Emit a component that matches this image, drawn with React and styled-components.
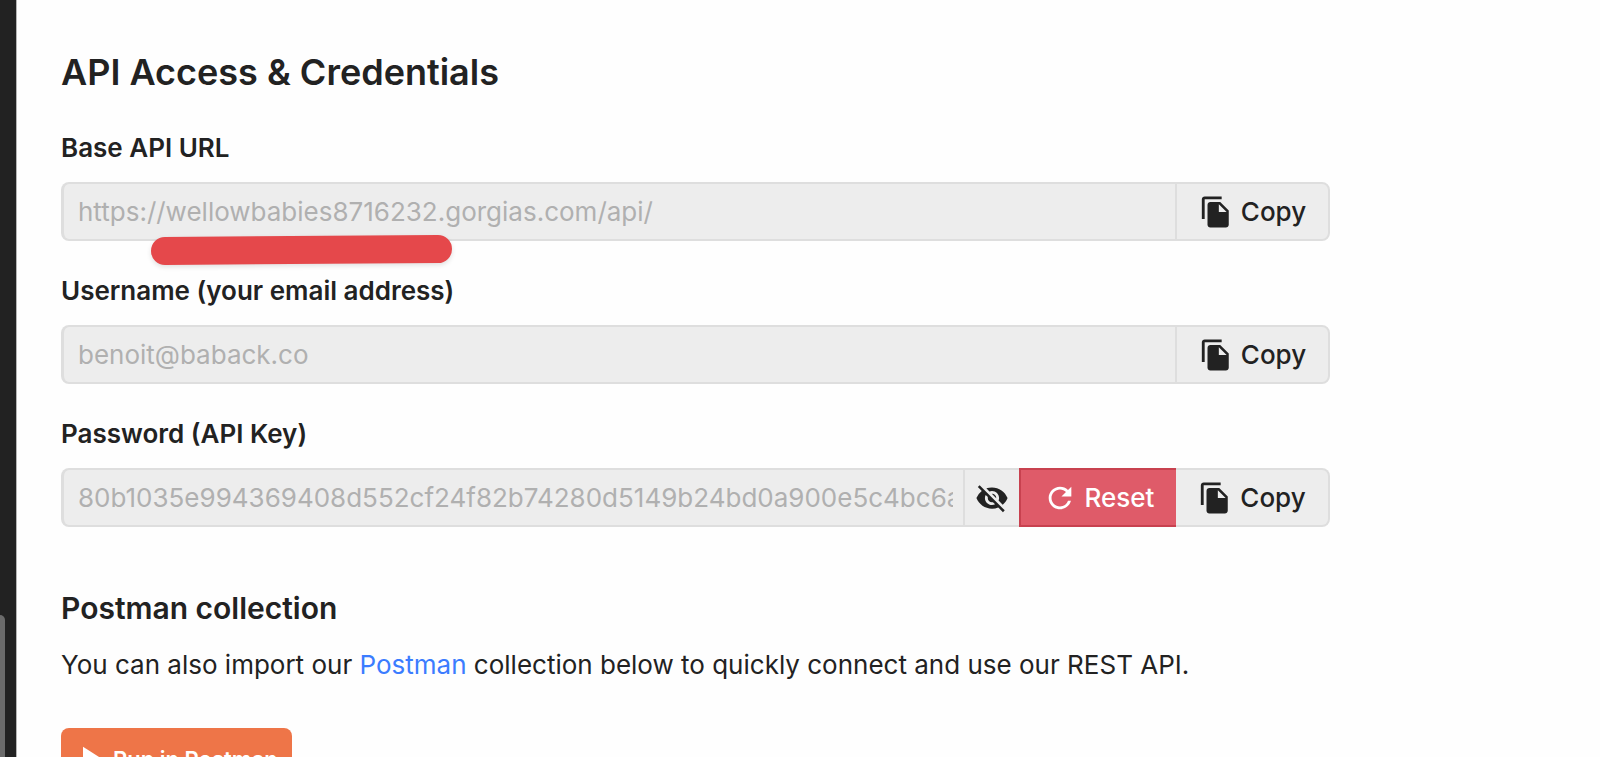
import React, { useState } from 'react'
import styled, { createGlobalStyle } from 'styled-components'
import { MdFileCopy, MdPlayArrow, MdRefresh, MdVisibilityOff } from 'react-icons/md'

const GlobalStyle = createGlobalStyle`
  * {
    box-sizing: border-box;
  }

  body {
    margin: 0;
    overflow: hidden;
    background: #fefefe;
    color: #222;
    font-family: Inter, sans-serif;
    font-size: 26px;
  }
`

const Layout = styled.div`
  display: flex;
  height: 100vh;
`

const Sidebar = styled.aside`
  display: flex;
  align-items: flex-end;
  flex: 0 0 17px;
  background: #222;
  border-right: 1px solid #b5b5b5;
`

const ScrollThumb = styled.div`
  width: 5px;
  height: 142px;
  background: #6b6b6b;
  border-top-right-radius: 5px;
`

const Content = styled.main`
  flex: 1;
  min-width: 0;
  padding: 50px 44px 0;
  overflow: hidden;
`

const Title = styled.h1`
  margin: 0 0 38px;
  font-size: 36px;
  line-height: 44px;
  font-weight: 600;
`

const Field = styled.div`
  position: relative;
  max-width: 1269px;
  margin-bottom: 34px;
`

const Label = styled.label`
  display: block;
  width: fit-content;
  margin-bottom: 18px;
  line-height: 32px;
  font-weight: 600;
`

const InputGroup = styled.div`
  display: flex;
  height: 59px;
  border-radius: 8px;
`

const Input = styled.input`
  flex: 1;
  min-width: 0;
  padding: 0 10px 0 14px;
  border: 2px solid #dedede;
  border-left-width: 3px;
  border-right: 0;
  border-radius: 8px 0 0 8px;
  background: #ededed;
  color: #b0b0b0;
  font: inherit;
  outline: none;
`

const Button = styled.button`
  display: flex;
  align-items: center;
  justify-content: center;
  gap: 8px;
  width: ${({ $width }) => $width}px;
  padding: 0;
  border: 2px solid ${({ $danger }) => ($danger ? '#c8414f' : '#dedede')};
  border-right-width: ${({ $last }) => ($last ? 2 : 0)}px;
  border-left-width: ${({ $joined }) => ($joined ? 0 : 2)}px;
  border-radius: ${({ $last }) => ($last ? '0 8px 8px 0' : '0')};
  background: ${({ $danger }) => ($danger ? '#df5b69' : '#ededed')};
  color: ${({ $danger }) => ($danger ? '#fff' : '#222')};
  font: inherit;
  font-weight: 500;
  cursor: pointer;

  svg {
    flex: none;
    width: 34px;
    height: 34px;
  }
`

const Marker = styled.div`
  position: absolute;
  top: 104px;
  left: 90px;
  width: 301px;
  height: 28px;
  border-radius: 14px;
  background: #e5484b;
  box-shadow: 0 2px 5px rgba(0, 0, 0, 0.12);
  transform: rotate(-0.4deg);
  pointer-events: none;
`

const Subtitle = styled.h2`
  margin: 63px 0 19px;
  font-size: 30px;
  line-height: 36px;
  font-weight: 600;
`

const Text = styled.p`
  margin: 0 0 43px;
  line-height: 40px;
`

const Link = styled.a`
  color: #3b7cff;
  text-decoration: none;
`

const RunButton = styled.button`
  display: flex;
  align-items: center;
  gap: 2px;
  height: 62px;
  padding: 0 14px 0 8px;
  border: 0;
  border-radius: 8px;
  background: #ee7548;
  color: #fff;
  font: inherit;
  font-size: 22px;
  font-weight: 600;
  cursor: pointer;

  svg {
    width: 42px;
    height: 42px;
  }
`

const copy = (value) => navigator.clipboard?.writeText(value)

const CredentialField = ({ id, label, value, type = 'text', joined, actions, children }) => (
    <Field>
        <Label htmlFor={id}>{label}</Label>
        <InputGroup>
            <Input id={id} type={type} value={value} readOnly />
            {actions}
            <Button type="button" $width={joined ? 154 : 155} $last $joined={joined} onClick={() => copy(value)}>
                <MdFileCopy />
                Copy
            </Button>
        </InputGroup>
        {children}
    </Field>
)

const App = () => {
    const [visible, setVisible] = useState(true)

    return (
        <>
            <GlobalStyle />
            <Layout>
                <Sidebar>
                    <ScrollThumb />
                </Sidebar>
                <Content>
                    <Title>API Access &amp; Credentials</Title>

                    <CredentialField id="base-url" label="Base API URL" value="https://wellowbabies8716232.gorgias.com/api/">
                        <Marker />
                    </CredentialField>
                    <CredentialField id="username" label="Username (your email address)" value="benoit@baback.co" />
                    <CredentialField
                        id="api-key"
                        label="Password (API Key)"
                        type={visible ? 'text' : 'password'}
                        value="80b1035e994369408d552cf24f82b74280d5149b24bd0a900e5c4bc6a"
                        joined
                        actions={
                            <>
                                <Button type="button" $width={56} aria-label="Toggle API key" onClick={() => setVisible(!visible)}>
                                    <MdVisibilityOff />
                                </Button>
                                <Button type="button" $width={157} $danger>
                                    <MdRefresh />
                                    Reset
                                </Button>
                            </>
                        }
                    />

                    <Subtitle>Postman collection</Subtitle>
                    <Text>
                        You can also import our <Link href="#postman">Postman</Link> collection below to quickly connect and use our REST API.
                    </Text>
                    <RunButton type="button">
                        <MdPlayArrow />
                        Run in Postman
                    </RunButton>
                </Content>
            </Layout>
        </>
    )
}

export default App
